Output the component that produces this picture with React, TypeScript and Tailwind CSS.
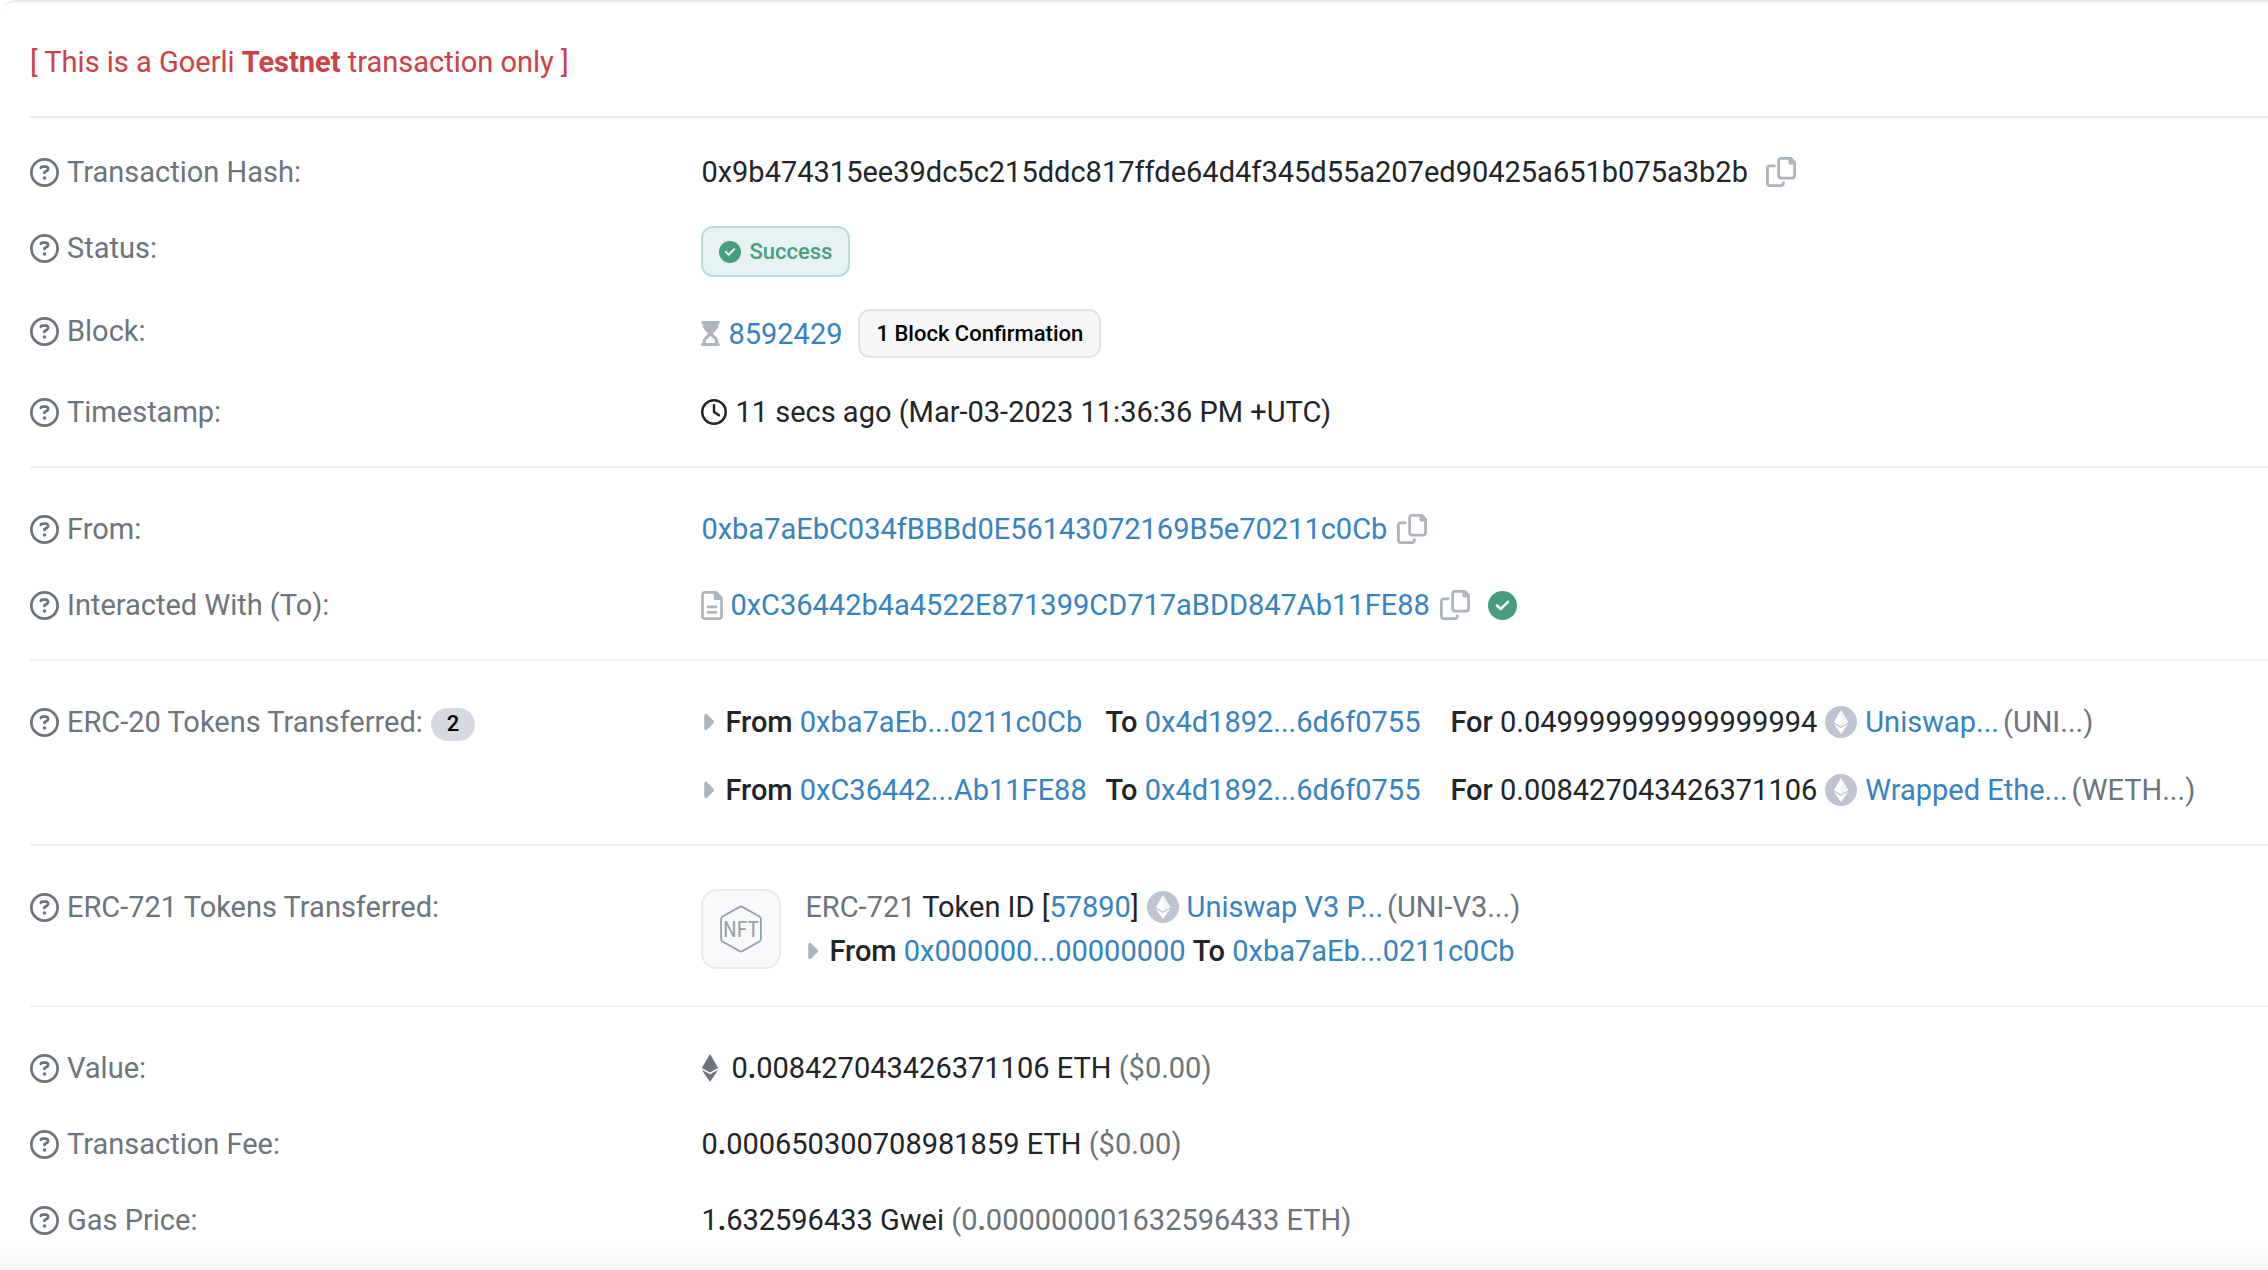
import type { ReactNode } from "react";
import {
  FaCaretRight,
  FaCircleCheck,
  FaHourglassStart,
  FaRegCircleQuestion,
  FaRegClock,
} from "react-icons/fa6";

const TX_HASH =
  "0x9b474315ee39dc5c215ddc817ffde64d4f345d55a207ed90425a651b075a3b2b";

const ERC20_TRANSFERS = [
  {
    from: "0xba7aEb...0211c0Cb",
    to: "0x4d1892...6d6f0755",
    amount: "0.049999999999999994",
    token: "Uniswap...",
    symbol: "(UNI...)",
  },
  {
    from: "0xC36442...Ab11FE88",
    to: "0x4d1892...6d6f0755",
    amount: "0.008427043426371106",
    token: "Wrapped Ethe...",
    symbol: "(WETH...)",
  },
];

function Row({
  label,
  badge,
  children,
}: {
  label: string;
  badge?: string;
  children: ReactNode;
}) {
  return (
    <div className="flex items-start">
      <dt className="w-[30%] shrink-0 flex items-center gap-2 text-[#6c757d]">
        <FaRegCircleQuestion className="size-[29px] shrink-0" />
        <span>{label}</span>
        {badge && (
          <span className="h-[33px] mt-1 px-4 flex items-center rounded-full bg-[#d6d9df] text-black text-[22px] font-medium">
            {badge}
          </span>
        )}
      </dt>
      <dd className="flex-1 min-w-0 whitespace-nowrap">{children}</dd>
    </div>
  );
}

function Section({ children }: { children: ReactNode }) {
  return (
    <dl className="flex flex-col gap-8 pt-[39px] pb-8 border-b-2 border-[#eff1f3] last:border-b-0">
      {children}
    </dl>
  );
}

function Link({ children }: { children: ReactNode }) {
  return (
    <a href="#" className="text-[#3583bf] hover:text-[#1f5f92]">
      {children}
    </a>
  );
}

function CopyButton({ label }: { label: string }) {
  return (
    <button type="button" aria-label={label} className="text-[#adb5bd]">
      <svg viewBox="0 0 512 512" className="size-[30px]" fill="currentColor">
        <path d="M502.6 70.6 441.4 9.4C435.4 3.4 427.2 0 418.7 0H256c-35.3 0-64 28.7-64 64v256c0 35.4 28.7 64 64 64h192c35.2 0 64-28.8 64-64V93.3c0-8.5-3.4-16.7-9.4-22.7zM464 320c0 8.8-7.2 16-16 16H256c-8.8 0-16-7.2-16-16V64.1c0-8.8 7.2-16 16-16h128V96c0 17.7 14.3 32 32 32h48zM272 448c0 8.8-7.2 16-16 16H64c-8.8 0-16-7.2-16-16V192.1c0-8.8 7.2-16 16-16h96V128H64c-35.3 0-64 28.7-64 64v256c0 35.3 28.7 64 64 64h192c35.2 0 64-28.8 64-64v-32h-48z" />
      </svg>
    </button>
  );
}

function ContractIcon() {
  return (
    <svg
      viewBox="0 0 384 512"
      className="w-[22px] h-[29px] text-[#adb5bd]"
      fill="currentColor"
    >
      <path d="M365.3 93.4 290.6 18.7C278.6 6.7 262.3 0 245.4 0H64C28.7 0 0 28.7 0 64v384c0 35.3 28.7 64 64 64h256c35.2 0 64-28.8 64-64V138.6c0-16.9-6.7-33.2-18.7-45.2zM336 448c0 8.8-7.2 16-16 16H64c-8.8 0-16-7.2-16-16V64.1c0-8.8 7.2-16 16-16h160V128c0 17.7 14.3 32 32 32h80zM96 280c0 13.3 10.8 24 24 24h144c13.3 0 24-10.7 24-24s-10.7-24-24-24H120c-13.2 0-24 10.8-24 24zm168 72H120c-13.2 0-24 10.8-24 24s10.8 24 24 24h144c13.3 0 24-10.8 24-24s-10.7-24-24-24z" />
    </svg>
  );
}

function Caret() {
  return (
    <FaCaretRight className="w-[13px] h-[26px] mr-[11px] text-[#adb5bd]" />
  );
}

function TokenIcon() {
  return (
    <svg viewBox="0 0 32 32" className="size-8 shrink-0">
      <circle cx="16" cy="16" r="16" fill="#bfc4d2" />
      <path d="M16 4 8.8 16.2l7.2 4.3 7.2-4.3z" fill="#fff" />
      <path d="M16 4v16.500l7.200-4.300z" fill="#f4f5f7" />
      <path d="M8.800 17.700 16 28l7.200-10.300L16 22z" fill="#fff" />
    </svg>
  );
}

function EthIcon() {
  return (
    <svg viewBox="0 0 18 28" className="w-[18px] h-7 shrink-0" fill="#6c757d">
      <path d="M9 0 .8 14 9 18.4 17.2 14z" />
      <path d="M.8 15.8 9 28l8.2-12.2L9 20.3z" />
    </svg>
  );
}

function NftThumb() {
  return (
    <div className="size-20 mt-1 shrink-0 flex items-center justify-center rounded-2xl border-2 border-[#e9ecef] bg-[#f8f9fb]">
      <svg viewBox="0 0 44 48" className="w-11 h-12" fill="none">
        <path
          d="M20.600 1.900a3 3 0 0 1 2.800 0l17 9.600a3 3 0 0 1 1.500 2.600v19.800a3 3 0 0 1-1.500 2.600l-17 9.600a3 3 0 0 1-2.800 0l-17-9.600a3 3 0 0 1-1.500-2.600V14.100a3 3 0 0 1 1.500-2.600z"
          stroke="#98a1aa"
          strokeWidth="1.800"
        />
        <text
          x="22"
          y="32"
          textAnchor="middle"
          fontFamily="'Roboto Condensed', 'Liberation Sans Narrow', Roboto, sans-serif"
          fontSize="22"
          fill="#98a1aa"
        >
          NFT
        </text>
      </svg>
    </div>
  );
}

// the decimal point is bold so it stands out in long values
function Amount({ value }: { value: string }) {
  const [whole, decimals] = value.split(".");
  return (
    <>
      {whole}
      <b className="font-bold">.</b>
      {decimals}
    </>
  );
}

export default function App() {
  return (
    <div className="relative min-h-screen overflow-hidden bg-white font-[Roboto,sans-serif] text-[29px] leading-[44px] text-[#212529]">
      <main className="pl-[30px] pt-[38px] border-t-2 border-[#e9ecef] rounded-tl-2xl">
        <p className="pb-8 text-[#cc4048] border-b-2 border-[#e9ecef]">
          [ This is a Goerli <b className="font-bold">Testnet</b> transaction
          only ]
        </p>

        <dl className="flex flex-col gap-8 py-8 border-b-2 border-[#eff1f3]">
          <Row label="Transaction Hash:">
            <div className="flex items-center gap-[18px]">
              <span>{TX_HASH}</span>
              <CopyButton label="Copy transaction hash" />
            </div>
          </Row>
          <Row label="Status:">
            <span className="w-fit h-[51px] px-4 flex items-center gap-2 rounded-xl border-2 border-[#b5ded6] bg-[#e7f3f3] text-[#459e80] text-[22px] font-medium">
              <FaCircleCheck className="size-[22px]" />
              Success
            </span>
          </Row>
          <Row label="Block:">
            <div className="flex items-center gap-2">
              <FaHourglassStart className="w-[19px] h-[25px] text-[#adb5bd]" />
              <Link>8592429</Link>
              <span className="h-[49px] ml-2 px-4 flex items-center rounded-xl border-2 border-[#e3e3e8] bg-[#f7f7f7] text-black text-[22px] font-medium">
                1 Block Confirmation
              </span>
            </div>
          </Row>
          <Row label="Timestamp:">
            <div className="flex items-center gap-2">
              <FaRegClock className="size-[26px]" />
              <span>11 secs ago (Mar-03-2023 11:36:36 PM +UTC)</span>
            </div>
          </Row>
        </dl>

        <Section>
          <Row label="From:">
            <div className="flex items-center gap-[10px]">
              <Link>0xba7aEbC034fBBBd0E56143072169B5e70211c0Cb</Link>
              <CopyButton label="Copy sender address" />
            </div>
          </Row>
          <Row label="Interacted With (To):">
            <div className="flex items-center gap-[10px]">
              <span className="flex items-center gap-[7px]">
                <ContractIcon />
                <Link>0xC36442b4a4522E871399CD717aBDD847Ab11FE88</Link>
              </span>
              <CopyButton label="Copy recipient address" />
              <FaCircleCheck className="size-[29px] ml-2 text-[#459e80]" />
            </div>
          </Row>
        </Section>

        <Section>
          <Row label="ERC-20 Tokens Transferred:" badge="2">
            <ul className="flex flex-col gap-6">
              {ERC20_TRANSFERS.map((t) => (
                <li key={t.from} className="flex items-center">
                  <Caret />
                  <span className="w-[380px]">
                    <span className="font-medium">From</span>{" "}
                    <Link>{t.from}</Link>
                  </span>
                  <span className="w-[345px]">
                    <span className="font-medium">To</span> <Link>{t.to}</Link>
                  </span>
                  <span className="flex items-center gap-2">
                    <span>
                      <span className="font-medium">For</span> {t.amount}
                    </span>
                    <TokenIcon />
                    <Link>{t.token}</Link>
                  </span>
                  <span className="ml-1 text-[#6c757d]">{t.symbol}</span>
                </li>
              ))}
            </ul>
          </Row>
        </Section>

        <Section>
          <Row label="ERC-721 Tokens Transferred:">
            <div className="flex items-start gap-6">
              <NftThumb />
              <div>
                <div className="flex items-center">
                  <span className="flex items-center gap-2">
                    <span>
                      <span className="text-[#6c757d]">ERC-721</span> Token ID [
                      <Link>57890</Link>]
                    </span>
                    <TokenIcon />
                    <Link>Uniswap V3 P...</Link>
                  </span>
                  <span className="ml-1 text-[#6c757d]">(UNI-V3...)</span>
                </div>
                <div className="flex items-center">
                  <Caret />
                  <span>
                    <span className="font-medium">From</span>{" "}
                    <Link>0x000000...00000000</Link>{" "}
                    <span className="font-medium">To</span>{" "}
                    <Link>0xba7aEb...0211c0Cb</Link>
                  </span>
                </div>
              </div>
            </div>
          </Row>
        </Section>

        <Section>
          <Row label="Value:">
            <div className="flex items-center gap-3">
              <EthIcon />
              <span>
                <Amount value="0.008427043426371106" /> ETH{" "}
                <span className="text-[#6c757d]">($0.00)</span>
              </span>
            </div>
          </Row>
          <Row label="Transaction Fee:">
            <Amount value="0.000650300708981859" /> ETH{" "}
            <span className="text-[#6c757d]">($0.00)</span>
          </Row>
          <Row label="Gas Price:">
            <Amount value="1.632596433" /> Gwei{" "}
            <span className="text-[#6c757d]">
              (<Amount value="0.000000001632596433" /> ETH)
            </span>
          </Row>
        </Section>
      </main>
      <div className="absolute inset-x-0 bottom-0 h-9 bg-linear-to-b from-transparent to-black/4 pointer-events-none" />
    </div>
  );
}
